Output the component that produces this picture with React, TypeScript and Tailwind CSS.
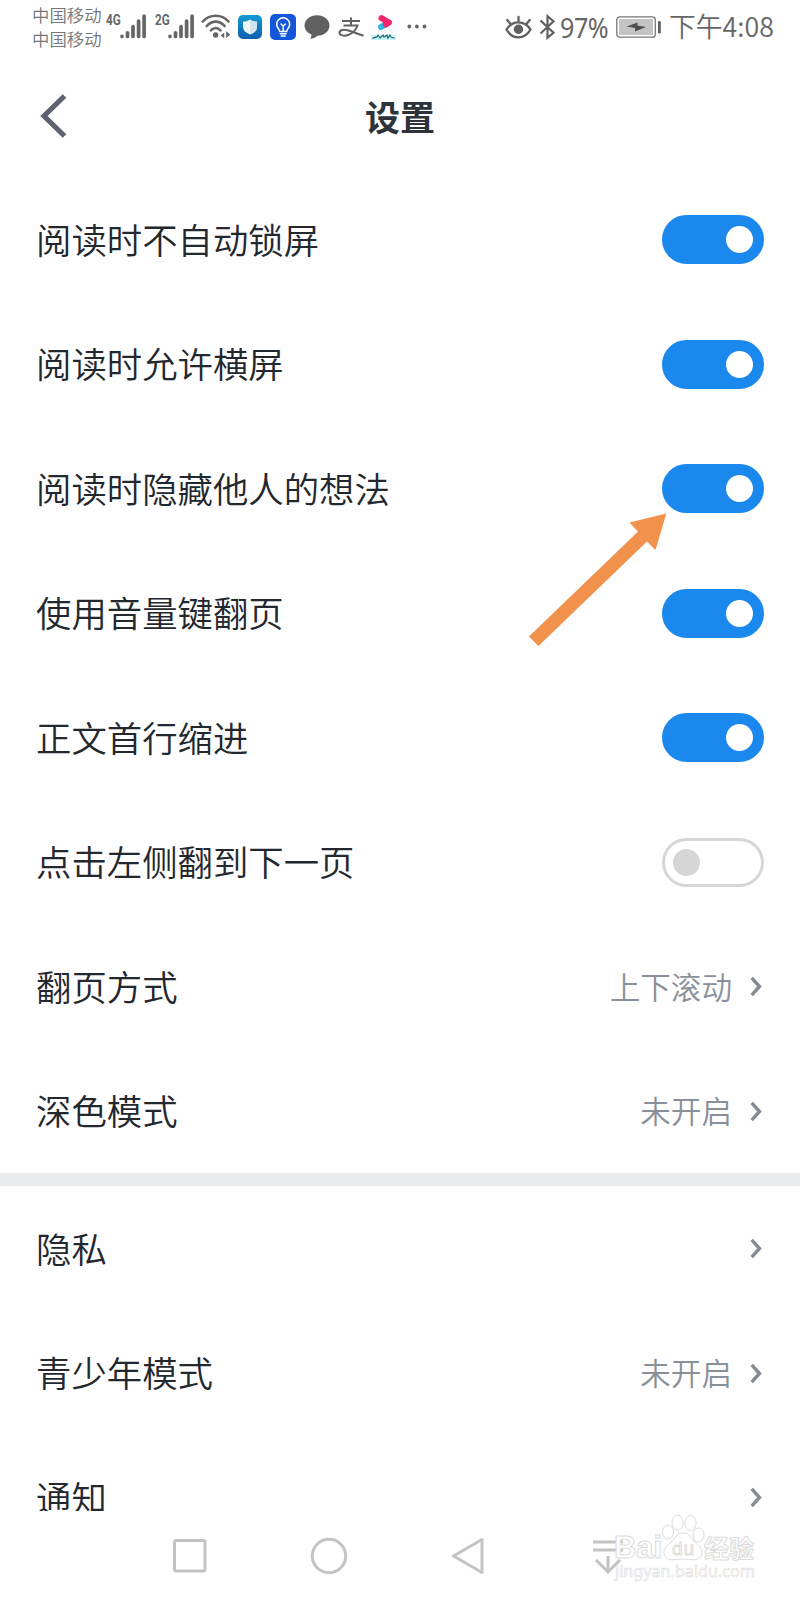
import React, { useState } from 'react'

interface SettingItem {
  id: string
  label: string
  type: 'switch' | 'link'
  enabled?: boolean
  value?: string
}

const readingSettings: SettingItem[] = [
  { id: 'keep-awake', label: '阅读时不自动锁屏', type: 'switch', enabled: true },
  { id: 'landscape', label: '阅读时允许横屏', type: 'switch', enabled: true },
  { id: 'hide-ideas', label: '阅读时隐藏他人的想法', type: 'switch', enabled: true },
  { id: 'volume-keys', label: '使用音量键翻页', type: 'switch', enabled: true },
  { id: 'indent', label: '正文首行缩进', type: 'switch', enabled: true },
  { id: 'left-tap', label: '点击左侧翻到下一页', type: 'switch', enabled: false },
  { id: 'page-mode', label: '翻页方式', type: 'link', value: '上下滚动' },
  { id: 'dark-mode', label: '深色模式', type: 'link', value: '未开启' }
]

const generalSettings: SettingItem[] = [
  { id: 'privacy', label: '隐私', type: 'link' },
  { id: 'teen-mode', label: '青少年模式', type: 'link', value: '未开启' },
  { id: 'notifications', label: '通知', type: 'link' }
]

function SignalBars() {
  return (
    <svg className="h-[25px] w-[26px]" viewBox="0 0 26 25" stroke="#666" strokeWidth="3.7" strokeLinecap="round">
      <path d="M2 22.4v.1M7.5 18.9v3.6M13 12.7v9.8M18.6 7.2v15.3M24.100 2v20.500" />
    </svg>
  )
}

function StatusBar() {
  return (
    <div className="flex h-[54px] items-start pl-8 text-[#666]">
      <div className="mt-[3px] w-[70px] text-[17.4px] leading-6 font-[350] whitespace-nowrap text-[#777]">
        <div>中国移动</div>
        <div>中国移动</div>
      </div>
      <span className="mt-[13px] ml-1 w-[14px] origin-left scale-x-[0.78] font-[Roboto] text-[15px] leading-[14px] font-bold">4G</span>
      <div className="mt-[14px]"><SignalBars /></div>
      <span className="mt-[13px] ml-[9px] w-[13px] origin-left scale-x-[0.78] font-[Roboto] text-[15px] leading-[14px] font-bold">2G</span>
      <div className="mt-[14px]"><SignalBars /></div>

      {/* Wifi */}
      <svg className="mt-[13px] ml-[7px] h-[27px] w-[30px]" viewBox="0 0 30 27" fill="none" stroke="#666" strokeWidth="2.6" strokeLinecap="round">
        <path d="M1.8 8.5C8.8.8 20.5.8 27.5 8.5M5.8 13c5-5.8 12.9-5.8 17.8 0M9.9 17.3c2.9-3 6.7-3 9.6 0" />
        <circle cx="14.6" cy="22" r="2.7" fill="#666" stroke="none" />
        <path d="m23.2 19.6-3.6 2.9 3.6 2.8zM25.2 18.2v6.9l4.2-3.5z" fill="#666" stroke="none" />
      </svg>

      {/* Notification icons */}
      <svg className="mt-[15px] ml-[7px] h-6 w-6" viewBox="0 0 24 24">
        <defs>
          <linearGradient id="guard" x2="0" y2="1">
            <stop stopColor="#139bd2" />
            <stop offset="1" stopColor="#0b5eb0" />
          </linearGradient>
        </defs>
        <rect width="24" height="24" rx="5" fill="url(#guard)" />
        <path d="M12 4.5c2.3 1.7 4.7 2.2 7 2.2v5c0 3.8-3 6.1-7 7.7-4-1.6-7-3.9-7-7.7v-5c2.3 0 4.7-.5 7-2.2z" fill="#eef6f9" />
        <path d="M12 4.5c2.3 1.7 4.7 2.2 7 2.2v5c0 3.8-3 6.1-7 7.7z" fill="#d3e5ec" />
      </svg>
      <svg className="mt-[14px] ml-2 h-[26px] w-[26px]" viewBox="0 0 26 26" fill="none" stroke="#fff" strokeWidth="1.5" strokeLinecap="round">
        <rect width="26" height="26" rx="5" fill="#1457db" stroke="none" />
        <path d="M9.7 17.5c0-2.5-3-3.5-3-7.2a6.5 6.5 0 0 1 13 0c0 3.7-3 4.7-3 7.2zM10.3 19.8h5.8M11.2 22h4M13.2 17v-5M11 10l2.2 2 2.2-2" />
      </svg>
      <svg className="mt-[14px] ml-[8px] h-[26px] w-[26px]" viewBox="0 0 26 26" fill="#606060">
        <path d="M13 1.2c7 0 12.5 4.5 12.5 10.3S20 21.8 13.5 21.8c-2 2-4.7 3-7.5 3 1-1.1 1.6-2.6 1.5-4.3C3.3 18.7.5 15.5.5 11.5.5 5.7 6 1.2 13 1.2z" />
      </svg>
      {/* Alipay */}
      <svg className="mt-[17px] ml-[8px] h-[21px] w-[26px]" viewBox="0 0 26 21" fill="none" stroke="#606060" strokeWidth="2">
        <path d="M4 4h18M13 .5v8M5.5 8.5h14c-1.5 4.5-5 8-9.5 9.5-4 1.3-8.5.5-8.5-2.2 0-3 4.5-3.8 9-2.3l15 5.2" />
      </svg>
      <svg className="mt-[14px] ml-[7px] h-[27px] w-[26px]" viewBox="0 0 26 27" fill="none" strokeLinecap="round">
        <path d="M0 21h25v5H0z" fill="#c9f4f6" />
        <path d="m10 13 5-3" stroke="#2bb9e8" strokeWidth="6" />
        <path d="m10.5 4.2 7.5 4.3-3 2" stroke="#f3246b" strokeWidth="6" strokeLinejoin="round" />
        <path d="m2 24 4-1 1-2 2 3 3-3 1 2 3-2 1 3 2-3 1 2 3 1" stroke="#267083" strokeWidth="1.3" />
      </svg>
      <svg className="mt-[24px] ml-[10px] h-[5px] w-5" viewBox="0 0 20 5" fill="#666">
        <circle cx="2.3" cy="2.5" r="1.9" />
        <circle cx="9.9" cy="2.5" r="1.9" />
        <circle cx="17.5" cy="2.5" r="1.9" />
      </svg>

      <div className="ml-auto flex items-start pr-[28px]">
        {/* Eye comfort */}
        <svg className="mt-[15px] h-6 w-[27px]" viewBox="0 0 27 24" fill="none" stroke="#606060" strokeWidth="2.3" strokeLinecap="round">
          <path d="M1.5 14.5C7.5 5 19.5 5 25.5 14.5 19.5 25 7.5 25 1.5 14.5zM13.5 6.5V1.8M5.5 9 2.3 5M21.5 9l3.2-4" />
          <circle cx="13.5" cy="14.3" r="4.7" fill="#606060" stroke="none" />
        </svg>
        {/* Bluetooth */}
        <svg className="mt-[14px] ml-[7px] h-[26px] w-[17px]" viewBox="0 0 17 26" fill="none" stroke="#606060" strokeWidth="2.2">
          <path d="m1.5 6.5 13 12.3-6 5V2.2l6 5-13 12.3" />
        </svg>
        <span className="mt-[12px] ml-[4px] w-[51px] font-[Roboto] text-[27px] leading-8 font-light tracking-[-0.5px] whitespace-nowrap">
          <span className="inline-block w-[50px] origin-left scale-x-[0.93] font-['Noto_Sans'] font-normal">97%</span>
        </span>
        <svg className="mt-[16px] ml-[5px] h-[22px] w-[46px]" viewBox="0 0 46 22">
          <rect x=".8" y=".8" width="38.5" height="20.4" rx="3" fill="#fff" stroke="#777" strokeWidth="1.3" />
          <rect x="3" y="3" width="34" height="16" rx="1" fill="#c4c4c4" />
          <path d="m10.5 10.5 11-4v3l8.5 1.5-11 4.5v-3.5z" fill="#505050" />
          <rect x="42" y="5" width="2.8" height="12.5" rx="1.3" fill="#606060" />
        </svg>
        <span className="mt-[10px] ml-[7px] w-[103px] text-[26.8px] leading-8 font-[350] whitespace-nowrap">下午4:08</span>
      </div>
    </div>
  )
}

function Switch({ label, defaultOn }: { label: string; defaultOn: boolean }) {
  const [on, setOn] = useState(defaultOn)

  return (
    <button
      role="switch"
      aria-checked={on}
      aria-label={label}
      onClick={() => setOn(!on)}
      className={`flex h-[49px] w-[102px] items-center rounded-full border-[3px] px-2 ${
        on ? 'justify-end border-[#1b88ee] bg-[#1b88ee]' : 'justify-start border-[#d6d6d6] bg-white'
      }`}
    >
      <span className={`h-[27px] w-[27px] rounded-full ${on ? 'bg-white' : 'bg-[#d6d6d6]'}`} />
    </button>
  )
}

function SettingRow({ item }: { item: SettingItem }) {
  return (
    <div className="flex h-[124.5px] shrink-0 items-center justify-between pr-9 pl-9">
      <span className="pb-[2px] text-[35.4px] leading-none font-[350] text-[#23272e]">{item.label}</span>
      {item.type === 'switch' ? (
        <Switch label={item.label} defaultOn={!!item.enabled} />
      ) : (
        <div className="flex items-center pr-[2px]">
          <span className="pb-px text-[30.6px] leading-none font-[350] text-[#8a9099]">{item.value}</span>
          <svg className="ml-[18px] h-[21px] w-3" viewBox="0 0 12 21" fill="none" stroke="#858b93" strokeWidth="3.4">
            <path d="m1.7 1.800 7.800 8.700-7.800 8.700" />
          </svg>
        </div>
      )}
    </div>
  )
}

function NavigationBar() {
  return (
    <div className="relative flex h-[89px] items-center bg-[#fefefe]">
      <svg className="ml-[172px] h-[36px] w-[36px]" viewBox="0 0 36 36" fill="none" stroke="#c3c3c3" strokeWidth="3">
        <rect x="2.5" y="2.5" width="30.5" height="30.5" rx="1.5" />
      </svg>
      <svg className="ml-[102px] h-[38px] w-[38px]" viewBox="0 0 38 38" fill="none" stroke="#c3c3c3" strokeWidth="3">
        <circle cx="19" cy="19" r="16.7" />
      </svg>
      <svg className="ml-[103px] h-[38px] w-[34px]" viewBox="0 0 34 38" fill="none" stroke="#c3c3c3" strokeWidth="3" strokeLinejoin="round">
        <path d="M2.5 19 31 2.5v33z" />
      </svg>
      <svg className="ml-[107px] h-[36px] w-[32px]" viewBox="0 0 32 36" fill="none" stroke="#c3c3c3" strokeWidth="3">
        <path d="M1 4h30M1 12h30M16 18v15M4 22l12 12 12-12" />
      </svg>

      {/* Baidu Jingyan mark */}
      <svg className="absolute top-0 left-[606px] h-[80px] w-[160px]" viewBox="0 0 160 80" fill="#fff" stroke="#dcdcdc" strokeWidth="1">
        <text x="8" y="47" fontFamily="Liberation Sans" fontSize="31" fontWeight="bold" textLength="48" lengthAdjust="spacingAndGlyphs">Bai</text>
        <ellipse cx="62" cy="21" rx="5.5" ry="7" />
        <ellipse cx="71.5" cy="11.5" rx="5.5" ry="7.500" />
        <ellipse cx="84.5" cy="12" rx="5.5" ry="7.500" />
        <ellipse cx="92.5" cy="24" rx="5.5" ry="7" />
        <path d="M77 22c7 0 8 6 12 9 5 4 9 9 6 14-3 6-11 3-18 3s-15 3-18-3c-3-5 1-10 6-14 4-3 5-9 12-9z" />
        <text x="66" y="44" fontFamily="Liberation Sans" fontSize="19" textLength="22">du</text>
        <text x="98" y="47" fontFamily="Noto Sans CJK SC" fontSize="25" fontWeight="bold" textLength="50">经验</text>
        <text x="9" y="66" fontFamily="Noto Sans" fontSize="17" textLength="140" strokeWidth=".6" lengthAdjust="spacingAndGlyphs">jingyan.baidu.com</text>
      </svg>
    </div>
  )
}

export default function App() {
  return (
    <div className="relative flex h-[1600px] w-[800px] flex-col overflow-hidden bg-[#fefefe] font-['Noto_Sans_CJK_SC',sans-serif]">
      <StatusBar />

      {/* Header */}
      <header className="grid h-[123.25px] shrink-0 grid-cols-3 items-center">
        <button aria-label="返回" className="ml-10 w-[28px]">
          <svg className="h-[44px] w-[28px]" viewBox="0 0 28 44" fill="none" stroke="#5c636e" strokeWidth="5.2">
            <path d="M24.5 2 4 22l20.5 20" />
          </svg>
        </button>
        <h1 className="pb-[1px] text-center text-[35px] leading-none font-bold text-[#2d323b]">设置</h1>
      </header>

      <main className="min-h-0 flex-1 overflow-hidden">
        {readingSettings.map(item => (
          <SettingRow key={item.id} item={item} />
        ))}
        <div className="h-[13px] bg-[#ebecee]" />
        {generalSettings.map(item => (
          <SettingRow key={item.id} item={item} />
        ))}
      </main>

      <NavigationBar />

      {/* Pointer to the "hide ideas" switch */}
      <svg className="pointer-events-none absolute top-[510px] left-[525px] h-[140px] w-[145px]" viewBox="0 0 145 140" fill="#f1924c">
        <path d="m141.3 3.500-36.800 9 8.500 9L4 126.500l9.500 9.500L122 31.500l8.500 8.500z" />
      </svg>
    </div>
  )
}
